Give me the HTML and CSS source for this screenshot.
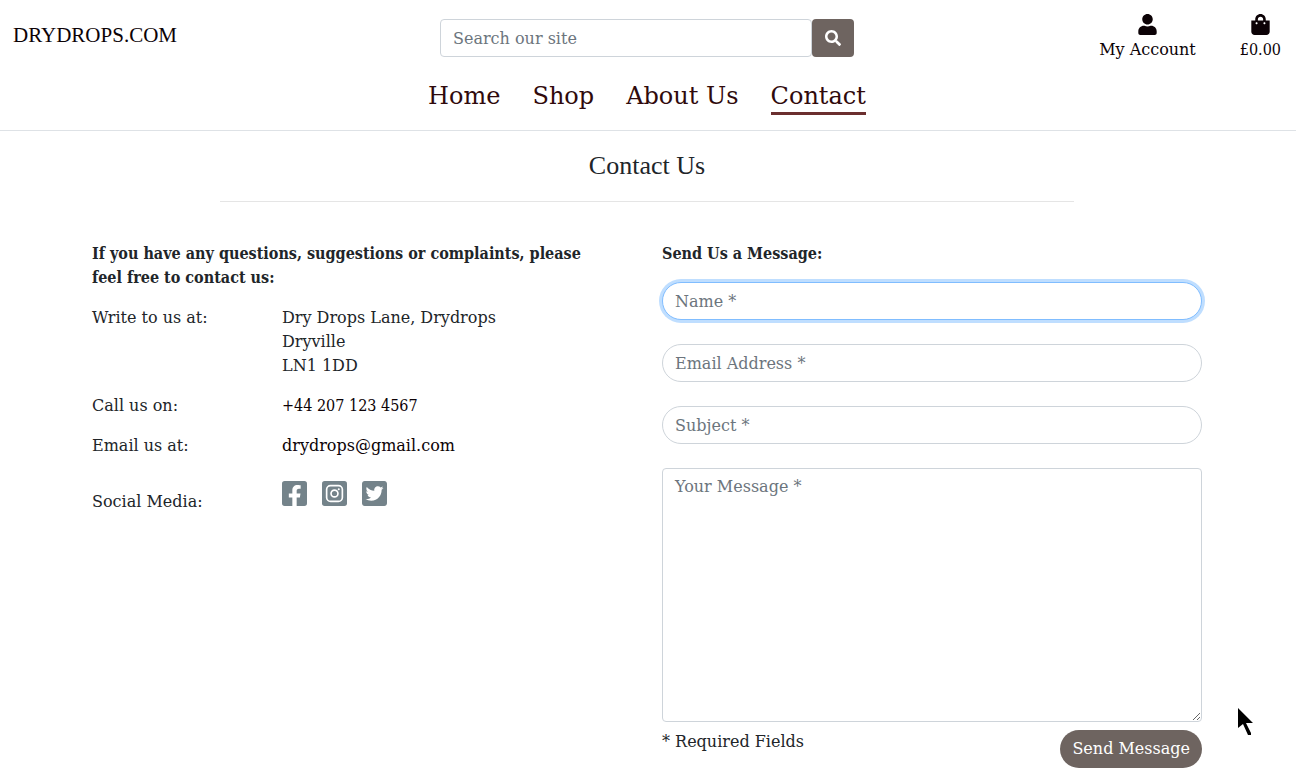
FILE: index.html
```html
<!DOCTYPE html>
<html lang="en">
<head>
<meta charset="utf-8">
<meta name="viewport" content="width=device-width, initial-scale=1">
<title>Contact Us - Drydrops.com</title>
<link rel="stylesheet" href="styles.css">
</head>
<body>
<header class="site-header">
  <div class="top-row">
    <a class="brand" href="#">DRYDROPS.COM</a>
    <form class="search" role="search">
      <input class="field search-field" type="text" placeholder="Search our site" aria-label="Search our site">
      <button class="search-button" type="button" aria-label="Search">
        <svg class="search-icon" viewBox="0 0 512 512" aria-hidden="true"><path fill="currentColor" d="M505 442.700L405.300 343c-4.500-4.500-10.600-7-17-7H372c27.600-35.300 44-79.700 44-128C416 93.100 322.900 0 208 0S0 93.100 0 208s93.100 208 208 208c48.300 0 92.700-16.400 128-44v16.300c0 6.400 2.500 12.500 7 17l99.700 99.700c9.400 9.400 24.600 9.400 33.900 0l28.300-28.300c9.400-9.400 9.400-24.600.1-34zM208 336c-70.700 0-128-57.200-128-128 0-70.700 57.200-128 128-128 70.700 0 128 57.200 128 128 0 70.700-57.200 128-128 128z"/></svg>
      </button>
    </form>
    <div class="account-links">
      <a class="account-link" href="#">
        <svg class="account-icon" viewBox="0 0 448 512" aria-hidden="true"><path fill="currentColor" d="M224 256c70.700 0 128-57.300 128-128S294.700 0 224 0 96 57.300 96 128s57.300 128 128 128zm89.600 32h-16.700c-22.200 10.200-46.900 16-72.900 16s-50.600-5.800-72.900-16h-16.700C60.200 288 0 348.200 0 422.400V464c0 26.500 21.500 48 48 48h352c26.500 0 48-21.500 48-48v-41.600c0-74.200-60.200-134.400-134.400-134.400z"/></svg>
        <span>My Account</span>
      </a>
      <a class="account-link" href="#">
        <svg class="account-icon" viewBox="0 0 448 512" aria-hidden="true"><path fill="currentColor" d="M352 160v-32C352 57.420 294.579 0 224 0 153.420 0 96 57.420 96 128v32H0v272c0 44.183 35.817 80 80 80h288c44.183 0 80-35.817 80-80V160h-96zm-192-32c0-35.290 28.710-64 64-64s64 28.710 64 64v32H160v-32zm160 120c-13.255 0-24-10.745-24-24s10.745-24 24-24 24 10.745 24 24-10.745 24-24 24zm-192 0c-13.255 0-24-10.745-24-24s10.745-24 24-24 24 10.745 24 24-10.745 24-24 24z"/></svg>
        <span class="figures">£0.00</span>
      </a>
    </div>
  </div>
  <nav class="main-nav">
    <a href="#">Home</a>
    <a href="#">Shop</a>
    <a href="#">About Us</a>
    <a class="current" href="#" aria-current="page">Contact</a>
  </nav>
</header>
<main class="page">
  <h1 class="page-title">Contact Us</h1>
  <hr class="rule">
  <div class="columns">
    <section class="column">
      <h2 class="lead">If you have any questions, suggestions or complaints, please feel free to contact us:</h2>
      <dl class="details">
        <dt>Write to us at:</dt>
        <dd>Dry Drops Lane, Drydrops<br>Dryville<br>LN1 1DD</dd>
        <dt>Call us on:</dt>
        <dd><a class="figures" href="#">+44 207 123 4567</a></dd>
        <dt>Email us at:</dt>
        <dd><a href="#">drydrops@gmail.com</a></dd>
        <dt class="social-label">Social Media:</dt>
        <dd class="social">
          <a href="#" aria-label="Facebook"><svg viewBox="0 32 448 448" aria-hidden="true"><path fill="currentColor" d="M400 32H48A48 48 0 0 0 0 80v352a48 48 0 0 0 48 48h137.250V327.690h-63V256h63v-54.640c0-62.150 37-96.480 93.670-96.480 27.140 0 55.520 4.840 55.520 4.840v61h-31.270c-30.810 0-40.420 19.120-40.420 38.730V256h68.780l-11 71.690h-57.780V480H400a48 48 0 0 0 48-48V80a48 48 0 0 0-48-48z"/></svg></a>
          <a href="#" aria-label="Instagram"><svg viewBox="0 0 448 448" aria-hidden="true"><rect width="448" height="448" rx="48" fill="currentColor"/><rect x="83" y="83" width="282" height="282" rx="70" fill="none" stroke="#fff" stroke-width="30"/><circle cx="224" cy="224" r="62" fill="none" stroke="#fff" stroke-width="30"/><circle cx="300" cy="149" r="18" fill="#fff"/></svg></a>
          <a href="#" aria-label="Twitter"><svg viewBox="0 32 448 448" aria-hidden="true"><path fill="currentColor" d="M400 32H48C21.500 32 0 53.500 0 80v352c0 26.500 21.500 48 48 48h352c26.500 0 48-21.500 48-48V80c0-26.500-21.500-48-48-48zm-48.900 158.800c.2 2.800.2 5.700.2 8.500 0 86.700-66 186.600-186.600 186.600-37.200 0-71.700-10.800-100.700-29.400 5.300.6 10.400.8 15.800.8 30.700 0 58.900-10.400 81.400-28-28.800-.6-53-19.500-61.300-45.500 10.100 1.500 19.200 1.500 29.600-1.200-30-6.100-52.500-32.500-52.500-64.400v-.8c8.700 4.900 18.900 7.900 29.600 8.300a65.447 65.447 0 0 1-29.200-54.600c0-12.200 3.200-23.400 8.900-33.100 32.300 39.800 80.800 65.800 135.200 68.600-9.300-44.500 24-80.600 64-80.600 18.900 0 35.900 7.900 47.900 20.700 14.800-2.800 29-8.300 41.600-15.800-4.900 15.200-15.200 28-28.800 36.100 13.200-1.400 26-5.100 37.800-10.200-8.900 13.100-20.100 24.700-32.900 34z"/></svg></a>
        </dd>
      </dl>
    </section>
    <section class="column">
      <h2 class="lead">Send Us a Message:</h2>
      <form class="message-form">
        <input class="field pill" type="text" placeholder="Name *" aria-label="Name" autofocus>
        <input class="field pill" type="email" placeholder="Email Address *" aria-label="Email Address">
        <input class="field pill" type="text" placeholder="Subject *" aria-label="Subject">
        <textarea class="field message" rows="10" placeholder="Your Message *" aria-label="Your Message"></textarea>
        <div class="form-footer">
          <span>* Required Fields</span>
          <button class="send" type="button">Send Message</button>
        </div>
      </form>
    </section>
  </div>
</main>
<svg class="pointer" viewBox="0 0 16 28" aria-hidden="true"><path d="M0 0V20L5 16L10 27H13V25L8 15H15Z"/></svg>
</body>
</html>
```
FILE: styles.css
```css
* {
  box-sizing: border-box;
}

body {
  margin: 0;
  background: #fff;
  color: #212529;
  font-family: "DejaVu Serif", serif;
  font-size: 16px;
  line-height: 24px;
}

a {
  color: #0c0206;
  text-decoration: none;
}

input,
textarea,
button {
  font: inherit;
}

.figures {
  font-family: "DejaVu Serif Condensed", "DejaVu Serif", serif;
}

.site-header {
  border-bottom: 1px solid #dee2e6;
  padding-bottom: 15px;
}

.top-row {
  display: grid;
  grid-template-columns: 1fr 1fr 1fr;
}

.brand {
  padding: 19px 13px 0;
  font-family: "Liberation Serif", serif;
  font-size: 21px;
  line-height: 32px;
}

.search {
  display: flex;
  padding: 19px 10px 0 8px;
}

.field {
  display: block;
  width: 100%;
  height: 38px;
  padding: 6px 12px;
  border: 1px solid #ced4da;
  border-radius: 4px;
  background: #fff;
  color: #495057;
}

.field::placeholder {
  color: #6c757d;
  opacity: 1;
}

.field:focus {
  border-color: #80bdff;
  box-shadow: 0 0 0 3px #bfdeff;
  outline: 0;
}

.search-field {
  flex: 1;
  min-width: 0;
}

.search-button {
  width: 42px;
  height: 38px;
  padding: 0;
  border: 0;
  border-radius: 4px;
  background: #6e6460;
  color: #fff;
}

.search-icon {
  display: block;
  width: 16px;
  height: 16px;
  margin: 0 auto;
}

.account-links {
  display: flex;
  justify-content: flex-end;
  gap: 44px;
  padding: 14px 15px 0 0;
}

.account-link {
  display: flex;
  flex-direction: column;
  align-items: center;
  gap: 3px;
}

.account-icon {
  width: 19px;
  height: 21px;
}

.main-nav {
  display: flex;
  justify-content: center;
  gap: 32px;
  padding: 18px 2px 0 0;
  font-size: 24px;
  line-height: 32px;
}

.main-nav a {
  color: #300a0c;
  border-bottom: 3px solid transparent;
}

.main-nav .current {
  border-color: #6b2f2f;
}

.page {
  padding-right: 2px;
}

.page-title {
  margin: 18px 0 0;
  font-family: "Liberation Serif", serif;
  font-size: 26px;
  font-weight: 400;
  line-height: 34px;
  text-align: center;
}

.rule {
  width: 66%;
  margin: 18px auto 0;
  border: 0;
  border-top: 1px solid #e5e5e5;
}

.columns {
  display: grid;
  grid-template-columns: 1fr 1fr;
  max-width: 1140px;
  margin: 40px auto 0;
}

.column {
  padding: 0 15px;
}

.lead {
  margin: 0 0 16px;
  padding-right: 30px;
  font-family: "DejaVu Serif Condensed", "DejaVu Serif", serif;
  font-size: 16px;
  font-weight: 700;
  line-height: 24px;
}

.details {
  display: grid;
  grid-template-columns: 1fr 2fr;
  row-gap: 16px;
  margin: 0 -30px 0 0;
}

.details dd {
  margin: 0;
}

.social {
  display: flex;
  gap: 15px;
  padding-top: 7px;
}

.social-label {
  padding-top: 16px;
}

.social a {
  color: #74838a;
}

.social svg {
  display: block;
  width: 25px;
  height: 25px;
}

.pill {
  margin-bottom: 24px;
  border-radius: 19px;
}

.message {
  height: auto;
  resize: vertical;
}

.form-footer {
  display: flex;
  justify-content: space-between;
  align-items: flex-start;
  margin-top: 8px;
}

.send {
  height: 38px;
  padding: 0 12px;
  border: 0;
  border-radius: 19px;
  background: #6e6460;
  color: #fff;
}

.pointer {
  position: absolute;
  left: 1238px;
  top: 708px;
  width: 16px;
  height: 28px;
}
```
